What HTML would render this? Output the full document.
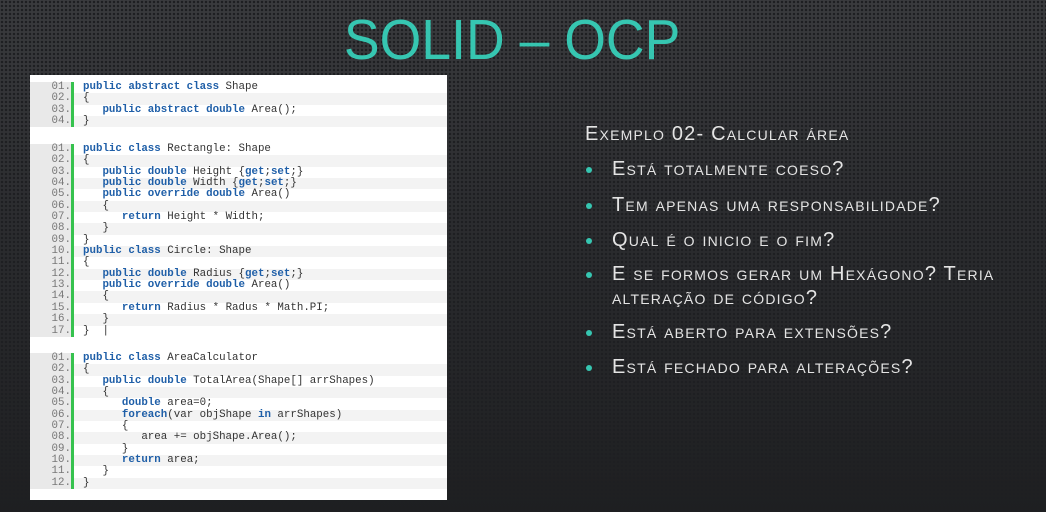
<!DOCTYPE html>
<html><head><meta charset="utf-8"><style>
body{margin:0;width:1046px;height:512px;overflow:hidden;background:#2c2d30;
background-image:radial-gradient(circle,#1e1f22 1.1px,transparent 1.4px),linear-gradient(180deg,#3a3b3e,#2c2d30 40%,#1e1f21);
background-size:4px 4px,100% 100%;font-family:"Liberation Sans",sans-serif;position:relative}
.title{position:absolute;left:342px;top:7px;width:362px;text-align:center;color:#36c6b1;font-size:57px;font-weight:normal;white-space:nowrap;transform:scaleX(0.94);transform-origin:left top}
.panel{position:absolute;left:30px;top:75px;width:417px;height:425px;background:#fff}
.blk{position:absolute;left:0;width:417px}
.row{height:11.35px;position:relative;font-family:"Liberation Mono",monospace;font-size:10.8px;line-height:11.35px;white-space:pre;color:#333}
.row:nth-child(even){background:#f3f3f3}
.ln{position:absolute;left:0;top:0;width:41px;height:100%;background:#e9e9e9;color:#777;text-align:right}
.bar{position:absolute;left:41px;width:3px;top:0;bottom:0;background:#36c24e}
.code{position:absolute;left:53px;top:0}
.k{color:#1f5fa8;font-weight:bold}
.txt{position:absolute;left:585px;color:#e4e4e4;font-variant:small-caps;font-size:20px;letter-spacing:1.2px;white-space:nowrap}
.b{position:absolute;left:586px;width:6px;height:6px;border-radius:50%;background:#36c6b1}
</style></head><body>
<div class="title">SOLID – OCP</div>
<div class="panel">
<div class="blk" style="top:7px">
<div class="row"><span class="ln">01.</span><span class="code"><span class="k">public abstract class</span> Shape</span></div>
<div class="row"><span class="ln">02.</span><span class="code">{</span></div>
<div class="row"><span class="ln">03.</span><span class="code">   <span class="k">public abstract double</span> Area();</span></div>
<div class="row"><span class="ln">04.</span><span class="code">}</span></div>
<div class="bar"></div></div>
<div class="blk" style="top:69px">
<div class="row"><span class="ln">01.</span><span class="code"><span class="k">public class</span> Rectangle: Shape</span></div>
<div class="row"><span class="ln">02.</span><span class="code">{</span></div>
<div class="row"><span class="ln">03.</span><span class="code">   <span class="k">public double</span> Height {<span class="k">get</span>;<span class="k">set</span>;}</span></div>
<div class="row"><span class="ln">04.</span><span class="code">   <span class="k">public double</span> Width {<span class="k">get</span>;<span class="k">set</span>;}</span></div>
<div class="row"><span class="ln">05.</span><span class="code">   <span class="k">public override double</span> Area()</span></div>
<div class="row"><span class="ln">06.</span><span class="code">   {</span></div>
<div class="row"><span class="ln">07.</span><span class="code">      <span class="k">return</span> Height * Width;</span></div>
<div class="row"><span class="ln">08.</span><span class="code">   }</span></div>
<div class="row"><span class="ln">09.</span><span class="code">}</span></div>
<div class="row"><span class="ln">10.</span><span class="code"><span class="k">public class</span> Circle: Shape</span></div>
<div class="row"><span class="ln">11.</span><span class="code">{</span></div>
<div class="row"><span class="ln">12.</span><span class="code">   <span class="k">public double</span> Radius {<span class="k">get</span>;<span class="k">set</span>;}</span></div>
<div class="row"><span class="ln">13.</span><span class="code">   <span class="k">public override double</span> Area()</span></div>
<div class="row"><span class="ln">14.</span><span class="code">   {</span></div>
<div class="row"><span class="ln">15.</span><span class="code">      <span class="k">return</span> Radius * Radus * Math.PI;</span></div>
<div class="row"><span class="ln">16.</span><span class="code">   }</span></div>
<div class="row"><span class="ln">17.</span><span class="code">}  |</span></div>
<div class="bar"></div></div>
<div class="blk" style="top:278px">
<div class="row"><span class="ln">01.</span><span class="code"><span class="k">public class</span> AreaCalculator</span></div>
<div class="row"><span class="ln">02.</span><span class="code">{</span></div>
<div class="row"><span class="ln">03.</span><span class="code">   <span class="k">public double</span> TotalArea(Shape[] arrShapes)</span></div>
<div class="row"><span class="ln">04.</span><span class="code">   {</span></div>
<div class="row"><span class="ln">05.</span><span class="code">      <span class="k">double</span> area=0;</span></div>
<div class="row"><span class="ln">06.</span><span class="code">      <span class="k">foreach</span>(var objShape <span class="k">in</span> arrShapes)</span></div>
<div class="row"><span class="ln">07.</span><span class="code">      {</span></div>
<div class="row"><span class="ln">08.</span><span class="code">         area += objShape.Area();</span></div>
<div class="row"><span class="ln">09.</span><span class="code">      }</span></div>
<div class="row"><span class="ln">10.</span><span class="code">      <span class="k">return</span> area;</span></div>
<div class="row"><span class="ln">11.</span><span class="code">   }</span></div>
<div class="row"><span class="ln">12.</span><span class="code">}</span></div>
<div class="bar"></div></div>
</div>
<div class="txt" style="top:123px">Exemplo 02- Calcular área</div>
<div class="b" style="top:167px"></div><div class="txt" style="left:612px;top:158px">Está totalmente coeso?</div>
<div class="b" style="top:203px"></div><div class="txt" style="left:612px;top:194px">Tem apenas uma responsabilidade?</div>
<div class="b" style="top:238px"></div><div class="txt" style="left:612px;top:229px">Qual é o inicio e o fim?</div>
<div class="b" style="top:272px"></div><div class="txt" style="left:612px;top:263px">E se formos gerar um Hexágono? Teria</div>
<div class="txt" style="left:612px;top:287px">alteração de código?</div>
<div class="b" style="top:330px"></div><div class="txt" style="left:612px;top:321px">Está aberto para extensões?</div>
<div class="b" style="top:365px"></div><div class="txt" style="left:612px;top:356px">Está fechado para alterações?</div>
</body></html>
